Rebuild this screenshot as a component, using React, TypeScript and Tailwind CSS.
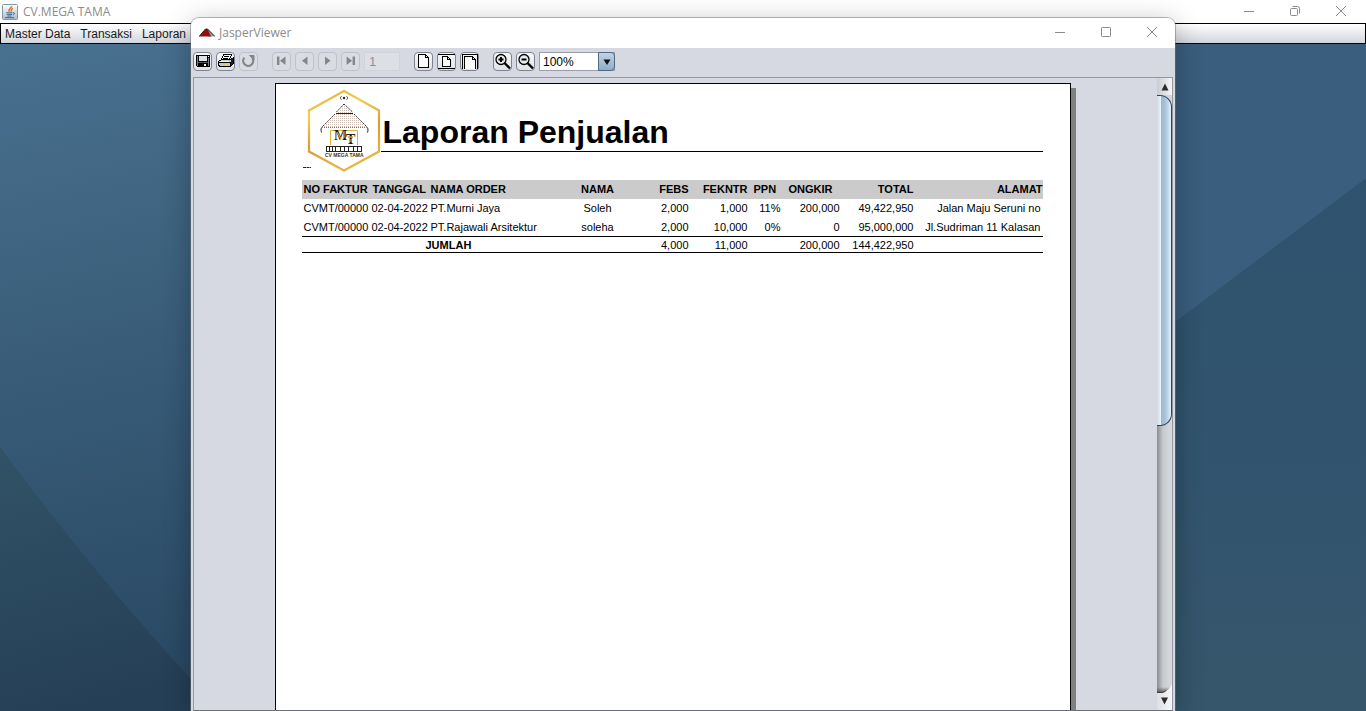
import type { ReactNode } from "react";

const sans = "font-['Liberation_Sans',Arial,sans-serif]";
const ui = "font-['Open_Sans','Segoe_UI',sans-serif]";

type Row = {
  faktur: string;
  tanggal: string;
  order: string;
  nama: string;
  febs: string;
  fekntr: string;
  ppn: string;
  ongkir: string;
  total: string;
  alamat: string;
};

const rows: Row[] = [
  {
    faktur: "CVMT/00000",
    tanggal: "02-04-2022",
    order: "PT.Murni Jaya",
    nama: "Soleh",
    febs: "2,000",
    fekntr: "1,000",
    ppn: "11%",
    ongkir: "200,000",
    total: "49,422,950",
    alamat: "Jalan Maju Seruni no",
  },
  {
    faktur: "CVMT/00000",
    tanggal: "02-04-2022",
    order: "PT.Rajawali Arsitektur",
    nama: "soleha",
    febs: "2,000",
    fekntr: "10,000",
    ppn: "0%",
    ongkir: "0",
    total: "95,000,000",
    alamat: "Jl.Sudriman 11 Kalasan",
  },
];

function Wallpaper() {
  return (
    <svg
      className="absolute inset-0 h-full w-full"
      viewBox="0 44 1366 667"
      preserveAspectRatio="none"
      aria-hidden="true"
    >
      <defs>
        <linearGradient id="wl" gradientUnits="userSpaceOnUse" x1="60" y1="44" x2="190" y2="680">
          <stop offset="0" stopColor="#48708f" />
          <stop offset="0.2" stopColor="#426885" />
          <stop offset="0.5" stopColor="#385c78" />
          <stop offset="1" stopColor="#294863" />
        </linearGradient>
        <linearGradient id="wd" gradientUnits="userSpaceOnUse" x1="20" y1="450" x2="90" y2="711">
          <stop offset="0" stopColor="#315266" />
          <stop offset="1" stopColor="#253f56" />
        </linearGradient>
        <linearGradient id="wr" gradientUnits="userSpaceOnUse" x1="0" y1="180" x2="0" y2="711">
          <stop offset="0" stopColor="#2f536f" />
          <stop offset="0.6" stopColor="#32546e" />
          <stop offset="1" stopColor="#36566b" />
        </linearGradient>
      </defs>
      <rect y="44" width="683" height="667" fill="url(#wl)" />
      <path d="M0 447 Q95 575 190 678 L225 711 H0Z" fill="url(#wd)" />
      <rect x="683" y="44" width="683" height="667" fill="#3a5e7e" />
      <path d="M683 711 V690 L1175 322 L1366 178 V711Z" fill="url(#wr)" />
    </svg>
  );
}

function JavaIcon() {
  return (
    <svg width="16" height="16" viewBox="0 0 16 16" aria-hidden="true">
      <defs>
        <linearGradient id="jv" x1="0" y1="0" x2="0" y2="1">
          <stop offset="0" stopColor="#ffffff" />
          <stop offset="1" stopColor="#a9bccb" />
        </linearGradient>
      </defs>
      <rect x="0.5" y="0.5" width="15" height="15" rx="1" fill="url(#jv)" stroke="#8296a8" />
      <path d="M9.6 2 C10 4 6 4.6 7.2 7.6 M11 4.4 C8.6 5.2 9.8 6.4 8.8 7.8" fill="none" stroke="#e8781e" strokeWidth="1.5" />
      <path d="M4.2 8.8 H10.6 M4.8 10.4 H10 M5.4 12 H9.4 M11 8.8 C13.4 8.4 12.8 10.6 10.8 10.8 M3 13.6 H12" fill="none" stroke="#3d6a96" strokeWidth="1" />
    </svg>
  );
}

function JasperIcon() {
  return (
    <svg width="16" height="16" viewBox="0 0 16 16" aria-hidden="true">
      <path d="M9 4 L16 11.5 H9Z" fill="#9a9a9a" />
      <path d="M0 11.5 L6.5 4 H8.5 L12 11.5Z" fill="#9c0a0a" />
      <path d="M0 11.5 L6.5 4 H8.5 L16 11.5" fill="none" stroke="#1a1a1a" strokeWidth="0.9" />
    </svg>
  );
}

function WindowControls({ restore = false }: { restore?: boolean }) {
  const cls = "flex h-full w-[46px] items-center justify-center";
  return (
    <div className="flex h-full pb-[2px]">
      <button type="button" aria-label="Minimize" className={cls}>
        <svg width="12" height="12" viewBox="0 0 12 12" stroke="#8c8c8c" fill="none">
          <path d="M1 6.5 H11" />
        </svg>
      </button>
      <button type="button" aria-label={restore ? "Restore" : "Maximize"} className={cls}>
        <svg width="12" height="12" viewBox="0 0 12 12" stroke="#8c8c8c" fill="none">
          {restore ? (
            <>
              <rect x="1.5" y="3.5" width="7" height="7" rx="1" />
              <path d="M3.5 1.5 H8.5 Q10.5 1.5 10.5 3.5 V8.5" />
            </>
          ) : (
            <rect x="1.5" y="1.5" width="9" height="9" rx="0.8" />
          )}
        </svg>
      </button>
      <button type="button" aria-label="Close" className={cls}>
        <svg width="12" height="12" viewBox="0 0 12 12" stroke="#8c8c8c" fill="none">
          <path d="M1 1 L11 11 M11 1 L1 11" />
        </svg>
      </button>
    </div>
  );
}

function ToolButton({ label, disabled = false, children }: { label: string; disabled?: boolean; children: ReactNode }) {
  return (
    <button
      type="button"
      aria-label={label}
      disabled={disabled}
      className={
        disabled
          ? "flex h-[19px] w-[19px] items-center justify-center rounded-[4px] border border-[#bfc2ca] bg-[#d9dce3] text-[#85868b]"
          : "flex h-[19px] w-[19px] items-center justify-center rounded-[4px] border border-[#7e838c] bg-linear-to-b from-[#f7f8fa] to-[#dfe2e8] text-black"
      }
    >
      <svg width="17" height="17" viewBox="0 0 17 17" className="shrink-0" fill="none" stroke="currentColor" aria-hidden="true">
        {children}
      </svg>
    </button>
  );
}

function SaveGlyph() {
  return (
    <g stroke="none" shapeRendering="crispEdges">
      <path d="M2 2H16V14H3L2 13Z" fill="#000" />
      <rect x="3" y="3" width="1" height="10" fill="#7d8084" />
      <rect x="14" y="5" width="1" height="8" fill="#7d8084" />
      <rect x="5" y="2" width="8" height="6" fill="#dfe2e6" />
      <rect x="5" y="2" width="8" height="1" fill="#000" />
      <rect x="14" y="3" width="1" height="1" fill="#fff" />
      <rect x="4" y="9" width="10" height="1" fill="#55585c" />
      <rect x="10" y="11" width="2" height="2" fill="#fff" />
    </g>
  );
}

function PrintGlyph() {
  return (
    <g shapeRendering="crispEdges">
      <path d="M6.5 1.5H14.5L12.5 6.5H4.5Z" fill="#fff" />
      <path d="M7 3.5H12 M6 5.5H11" />
      <path d="M1.5 8.5L4.5 6.5H13.5L16.5 4.5V10.5L13.5 13.5H3.5L1.5 12.5Z" fill="#c4c8c4" />
      <path d="M2 9.5H13 M13.5 9V13" />
      <path d="M14.5 6V12 M15.5 5V11" stroke="#222" />
      <path d="M8 11.5H11" stroke="#e8e400" strokeWidth="2" />
      <path d="M3 8.5H12" stroke="#fff" />
    </g>
  );
}

function Lens({ plus = false }: { plus?: boolean }) {
  return (
    <>
      <circle cx="7" cy="6.5" r="5" fill="#e9ebee" strokeWidth="1.3" />
      <path d="M4.5 6.5H9.5" strokeWidth="2" />
      {plus && <path d="M7 4V9" strokeWidth="2" />}
      <path d="M10.5 10L16 15.5" strokeWidth="2.4" />
    </>
  );
}

function Toolbar() {
  return (
    <div className={`flex h-[29px] shrink-0 items-center pb-[2px] pl-[2px] ${sans}`}>
      <div className="flex gap-1">
        <ToolButton label="Save"><SaveGlyph /></ToolButton>
        <ToolButton label="Print"><PrintGlyph /></ToolButton>
        <ToolButton label="Reload" disabled>
          <path d="M4.4 4.6A5 5 0 1 0 12.4 5.2" strokeWidth="2.2" />
          <path d="M9.5 2.5H14V7Z" fill="currentColor" strokeWidth="1" />
        </ToolButton>
      </div>
      <div className="ml-[14px] flex gap-1">
        <ToolButton label="First page" disabled>
          <g fill="currentColor" stroke="none"><path d="M4 3.500H6.400V12H4Z M12.500 3.500V12L7 7.800Z" /></g>
        </ToolButton>
        <ToolButton label="Previous page" disabled>
          <path d="M11.500 3.500V12L6 7.800Z" fill="currentColor" stroke="none" />
        </ToolButton>
        <ToolButton label="Next page" disabled>
          <path d="M6 3.500V12L11.500 7.800Z" fill="currentColor" stroke="none" />
        </ToolButton>
        <ToolButton label="Last page" disabled>
          <g fill="currentColor" stroke="none"><path d="M4.600 3.500V12L10.100 7.800Z M10.600 3.500H13V12H10.600Z" /></g>
        </ToolButton>
        <input
          aria-label="Page number"
          disabled
          defaultValue="1"
          className="h-[19px] w-9 border border-[#d0d3da] bg-[#dcdfe5] pl-1 text-[13px] text-[#8e8f9c]"
        />
      </div>
      <div className="ml-[14px] flex gap-1">
        <ToolButton label="Actual size">
          <path d="M3.5 1.5H10.5L13.5 4.5V14.5H3.5Z M10.5 1.5V4.5H13.5" fill="#fafafa" shapeRendering="crispEdges" />
        </ToolButton>
        <ToolButton label="Fit page">
          <path d="M0 1.5H17 M0 15.5H17" shapeRendering="crispEdges" />
          <path d="M4.5 3.5H9.5L12.5 6.5V13.5H4.5Z M9.5 3.5V6.5H12.5" fill="#fafafa" shapeRendering="crispEdges" />
        </ToolButton>
        <ToolButton label="Fit width">
          <path d="M1.5 16V1.5H16.5V16" shapeRendering="crispEdges" />
          <path d="M3.5 16V3.5H11.5L14.5 6.5V16 M11.5 3.5V6.5H14.5" fill="#fafafa" shapeRendering="crispEdges" />
        </ToolButton>
      </div>
      <div className="ml-[14px] flex items-center gap-1">
        <ToolButton label="Zoom in"><Lens plus /></ToolButton>
        <ToolButton label="Zoom out"><Lens /></ToolButton>
        <div className="relative">
          <select
            aria-label="Zoom ratio"
            defaultValue="100"
            className="block h-[19px] w-[76px] appearance-none border border-[#9a9fa9] bg-white pl-[3px] text-xs text-black"
          >
            <option value="50">50%</option>
            <option value="100">100%</option>
            <option value="200">200%</option>
          </select>
          <span className="pointer-events-none absolute top-0 right-0 flex h-[19px] w-[17px] items-center justify-center rounded-r-[4px] border border-[#4d6a84] bg-linear-to-b from-[#c3d3e2] to-[#8fadc8]">
            <svg width="8" height="6" viewBox="0 0 8 6" aria-hidden="true">
              <path d="M0.5 0.5H7.5L4 6Z" fill="#111" />
            </svg>
          </span>
        </div>
      </div>
    </div>
  );
}

function CompanyLogo() {
  return (
    <svg width="79" height="96" viewBox="0 0 79 96" className="shrink-0" role="img" aria-label="CV Mega Tama">
      <defs>
        <linearGradient id="gold" x1="0" y1="0" x2="0.3" y2="1">
          <stop offset="0" stopColor="#e0a93a" />
          <stop offset="0.3" stopColor="#f0d050" />
          <stop offset="0.65" stopColor="#dc9a3a" />
          <stop offset="1" stopColor="#e6b53c" />
        </linearGradient>
        <pattern id="tiles" width="2" height="2" patternUnits="userSpaceOnUse">
          <rect width="1" height="1" fill="#cdbfb8" />
        </pattern>
      </defs>
      <path d="M42 7 L77 26.500 V67.500 L42 86.500 L7 67.500 V26.500Z" fill="none" stroke="url(#gold)" strokeWidth="2.200" />
      <path d="M42 21 L21 43 H64Z" fill="url(#tiles)" />
      <path d="M42 20 L34 28.500 M42 20 L51 28.500 M33 30 L21 42 M52 30 L64 42" stroke="#333" strokeDasharray="2 1" fill="none" />
      <path d="M34 29.500H51" stroke="#222" fill="none" />
      <path d="M22 43.500H63" stroke="#777" strokeDasharray="1 1" fill="none" />
      <path d="M21 42.500 Q18 44 19.500 48.500 M64 42.500 Q67 44 65.500 48.500" stroke="#222" fill="none" />
      <circle cx="42" cy="14" r="1.200" fill="#222" />
      <path d="M39.500 12 Q37 14 39.500 16 M44.500 12 Q47 14 44.500 16" stroke="#444" strokeWidth="0.8" fill="none" />
      <path d="M28.500 61V46.500H55.500V61" stroke="#d9b23c" fill="none" />
      <text x="32" y="56" fontFamily="Liberation Serif" fontWeight="700" fontSize="14" fill="#1c1714">M</text>
      <text x="44" y="60" fontFamily="Liberation Serif" fontWeight="700" fontSize="14" fill="#1c1714">T</text>
      <path d="M35 48 L39 55 M42 47 V54 M46 53 H51 M49 55 V58" stroke="#e89b2c" strokeWidth="1.300" />
      <path d="M24 62.500H60 M24 67.500H60 M24.500 62V68 M27.500 62V68 M30.500 62V68 M33.500 62V68 M38.500 62V68 M42.500 62V68 M46.500 62V68 M51.500 62V68 M55.500 62V68 M59.500 62V68" stroke="#222" fill="none" />
      <text x="23" y="73" fontFamily="Liberation Sans" fontWeight="700" fontSize="5" fill="#3a3212">CV MEGA TAMA</text>
      <path d="M1 83.500H9" stroke="#222" strokeDasharray="3 0.500" />
    </svg>
  );
}

const headCell = "border-b border-transparent";
const bodyCell = "border-b border-transparent group-last:border-black";
const numCell = `${bodyCell} pr-px text-right`;
const footCell = "border-b border-black pr-px text-right";

function ReportTable() {
  return (
    <table className="w-full table-fixed border-separate border-spacing-0 text-[11px] leading-[14px] whitespace-nowrap text-black">
      <colgroup>
        <col className="w-[69px]" />
        <col className="w-[58px]" />
        <col className="w-[121px]" />
        <col className="w-[96px]" />
        <col className="w-[44px]" />
        <col className="w-[59px]" />
        <col className="w-[33px]" />
        <col className="w-[59px]" />
        <col className="w-[74px]" />
        <col />
      </colgroup>
      <thead>
        <tr className="h-[19px] bg-[#cbcbcb]">
          <th className={`${headCell} pl-[2px] text-left`}>NO FAKTUR</th>
          <th className={`${headCell} pl-[2px] text-left`}>TANGGAL</th>
          <th className={`${headCell} pl-[2px] text-left`}>NAMA ORDER</th>
          <th className={`${headCell} text-center`}>NAMA</th>
          <th className={`${headCell} pr-px text-right`}>FEBS</th>
          <th className={`${headCell} pr-px text-right`}>FEKNTR</th>
          <th className={`${headCell} pl-[5px] text-left`}>PPN</th>
          <th className={`${headCell} pl-[7px] text-left`}>ONGKIR</th>
          <th className={`${headCell} pr-px text-right`}>TOTAL</th>
          <th className={`${headCell} text-right`}>ALAMAT</th>
        </tr>
      </thead>
      <tbody>
        {rows.map((r) => (
          <tr key={r.order} className="group h-[19px]">
            <td className={`${bodyCell} pl-[2px]`}>{r.faktur}</td>
            <td className={`${bodyCell} pl-px`}>{r.tanggal}</td>
            <td className={`${bodyCell} pl-[2px]`}>{r.order}</td>
            <td className={`${bodyCell} text-center`}>{r.nama}</td>
            <td className={numCell}>{r.febs}</td>
            <td className={numCell}>{r.fekntr}</td>
            <td className={numCell}>{r.ppn}</td>
            <td className={numCell}>{r.ongkir}</td>
            <td className={numCell}>{r.total}</td>
            <td className={`${bodyCell} pr-[2px] text-right`}>{r.alamat}</td>
          </tr>
        ))}
      </tbody>
      <tfoot>
        <tr className="h-4">
          <th colSpan={3} className="border-b border-black pl-[124px] text-left">JUMLAH</th>
          <td className={footCell} />
          <td className={footCell}>4,000</td>
          <td className={footCell}>11,000</td>
          <td className={footCell} />
          <td className={footCell}>200,000</td>
          <td className={footCell}>144,422,950</td>
          <td className={footCell} />
        </tr>
      </tfoot>
    </table>
  );
}

function ScrollBar() {
  return (
    <div className="flex w-[15px] shrink-0 flex-col bg-linear-to-r from-[#8c8d90] via-[#c9cacd] via-40% to-[#d9dadd]">
      <button type="button" aria-label="Scroll up" className="flex h-[17px] items-center justify-center bg-linear-to-r from-[#c9ccd2] to-[#f5f6f8]">
        <svg width="8" height="8" viewBox="0 0 8 8" aria-hidden="true"><path d="M4 0.500L7.500 7.500H0.500Z" fill="#2b2b2b" /></svg>
      </button>
      <div className="h-[331px] rounded-r-[12px] border-y border-r border-[#2c4358] bg-linear-to-r from-[#8fa9c4] via-[#a9c4dc] via-60% to-[#e0f2fc]">
        <div className="h-full w-[4px] bg-linear-to-r from-[#c9dbea] to-[#eef6fb]" />
      </div>
      <div className="flex-1" />
      <button type="button" aria-label="Scroll down" className="block h-[28px]">
        <svg className="block h-full w-full" viewBox="0 0 15 28" preserveAspectRatio="none" aria-hidden="true">
          <defs>
            <linearGradient id="sbShade" x1="0" y1="0" x2="0" y2="1">
              <stop offset="0" stopColor="#555" stopOpacity="0" />
              <stop offset="1" stopColor="#444" stopOpacity="0.9" />
            </linearGradient>
            <linearGradient id="sbFace" x1="0" y1="0" x2="1" y2="0">
              <stop offset="0" stopColor="#dddfe3" />
              <stop offset="1" stopColor="#f7f8fa" />
            </linearGradient>
          </defs>
          <rect y="5" width="15" height="6" fill="url(#sbShade)" />
          <path d="M0 10.500H5 Q11 10 15 2 V28 H0Z" fill="url(#sbFace)" />
          <path d="M0 10.500H5 Q7 10.500 9 8.500" fill="none" stroke="#3c3e42" />
          <path d="M4 15.500H11L7.500 22.500Z" fill="#2b2b2b" />
        </svg>
      </button>
    </div>
  );
}

function JasperWindow() {
  return (
    <section
      aria-label="JasperViewer"
      className="absolute inset-x-[191px] top-[18px] bottom-0 flex flex-col overflow-hidden rounded-t-lg bg-[#d6d9e2] shadow-[0_0_0_1px_rgba(110,115,122,0.5),0_6px_28px_rgba(0,0,0,0.3)]"
    >
      <header className="flex h-[30px] shrink-0 items-center justify-between bg-white pl-2">
        <div className={`flex items-center gap-1 text-xs text-[#8c8c8c] ${ui}`}>
          <JasperIcon />
          <h2>JasperViewer</h2>
        </div>
        <WindowControls />
      </header>
      <Toolbar />
      <main className="mx-[2px] flex min-h-0 flex-1 border border-[#9297a1] border-b-[#6e7077]">
        <div className="min-w-0 flex-1 overflow-hidden pt-[5px] pr-[6px]">
          <article className={`mx-auto h-[1123px] w-full max-w-[796px] border border-black bg-white pr-[27px] pl-[26px] shadow-[5px_5px_0_#808080] ${sans}`}>
            <div className="flex items-start">
              <CompanyLogo />
              <h1 className="flex h-[68px] flex-1 items-end border-b border-black pb-px pl-[2px] text-[32px] leading-9 font-bold whitespace-nowrap text-black">
                Laporan Penjualan
              </h1>
            </div>
            <ReportTable />
          </article>
        </div>
        <ScrollBar />
      </main>
    </section>
  );
}

export default function App() {
  return (
    <div className="relative flex h-screen flex-col overflow-hidden bg-white">
      <header className="flex h-[23px] shrink-0 items-center justify-between pr-[2px] pl-[2px]">
        <div className={`flex items-center gap-[5px] text-xs text-[#8c8c8c] ${ui}`}>
          <JavaIcon />
          <span>CV.MEGA TAMA</span>
        </div>
        <WindowControls restore />
      </header>
      <nav className={`flex h-[21px] shrink-0 items-center gap-[2px] border border-black bg-linear-to-b from-white to-[#d2d5dd] text-xs text-[#1a1a1a] ${sans}`}>
        <button type="button" className="px-1">Master Data</button>
        <button type="button" className="px-1">Transaksi</button>
        <button type="button" className="px-1">Laporan</button>
      </nav>
      <div className="relative flex-1">
        <Wallpaper />
      </div>
      <JasperWindow />
    </div>
  );
}
